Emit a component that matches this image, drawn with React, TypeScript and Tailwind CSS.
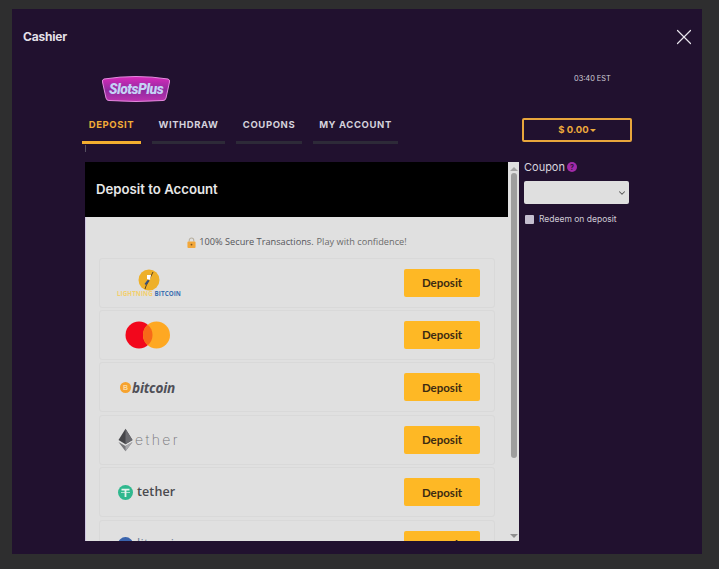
import { ChevronDown, X } from "lucide-react";

const tabs = [
  { title: "DEPOSIT", width: "w-[59px]", active: true },
  { title: "WITHDRAW", width: "w-[73px]", active: false },
  { title: "COUPONS", width: "w-[66px]", active: false },
  { title: "MY ACCOUNT", width: "w-[85px]", active: false },
];

const SlotsPlusLogo = () => (
  <div className="relative h-[28px] w-[70px]">
    <svg viewBox="0 0 70 28" className="h-full w-full">
      <defs>
        <linearGradient id="slotsFill" x1="0" y1="0" x2="0" y2="1">
          <stop offset="0" stopColor="#d92bbb" />
          <stop offset="0.55" stopColor="#8f2a9f" />
          <stop offset="1" stopColor="#bd33b0" />
        </linearGradient>
      </defs>
      <path
        d="M3 4 Q35 -1 67 4 Q69 4.500 68.500 7 L65 23 Q64.500 25.500 62 25.500 Q35 27.500 8 25.500 Q5.500 25.500 5 23 L1.500 7 Q1 4.500 3 4 Z"
        fill="url(#slotsFill)"
        stroke="#e58be0"
        strokeWidth="1"
      />
    </svg>
    <span className="absolute inset-0 flex items-center justify-center font-['Roboto',sans-serif] text-[14px] font-black italic tracking-[-0.5px] text-[#c5d2f5]">
      SlotsPlus
    </span>
  </div>
);

const LightningLogo = () => (
  <div className="ml-[17px] flex w-[64px] flex-col items-center">
    <svg viewBox="0 0 22 22" className="h-[22px] w-[22px]">
      <circle cx="11" cy="11" r="10.500" fill="#eeb029" />
      <path d="M15 3 L8 17 L7 20" stroke="#5a4320" strokeWidth="1" fill="none" />
      <path d="M9 6 L13 6 L12 11 L9 10 Z" fill="#ffffff" />
      <path d="M9.500 11 L11.500 12 L8 16 L6.500 15 Z" fill="#37507e" />
    </svg>
    <div className="-mt-[1px] whitespace-nowrap font-['Open_Sans',sans-serif] text-[6.2px] font-bold leading-[7px] tracking-[0.1px]">
      <span className="text-[#f3cf6c]">LIGHTNING </span>
      <span className="text-[#3b6fb0]">BITCOIN</span>
    </div>
  </div>
);

const MastercardLogo = () => (
  <svg viewBox="0 0 46 28" className="ml-[25px] h-[28px] w-[46px]">
    <circle cx="14" cy="14" r="13.500" fill="#f2071c" />
    <circle cx="31.500" cy="14" r="13.500" fill="#fea822" />
    <path d="M22.750 3.700 A13.500 13.500 0 0 1 22.750 24.300 A13.500 13.500 0 0 1 22.750 3.700 Z" fill="#f76a18" />
  </svg>
);

const BitcoinLogo = () => (
  <div className="ml-[20px] flex items-center gap-[1px]">
    <span className="flex h-[11px] w-[11px] items-center justify-center rounded-full bg-[#f6a32f] font-['Liberation_Sans',sans-serif] text-[7px] font-bold leading-none text-[#fbd9a4]">
      B
    </span>
    <span className="font-['Open_Sans',sans-serif] text-[13.6px] font-bold italic leading-none tracking-[-0.2px] text-[#4f4f57]">
      bitcoin
    </span>
  </div>
);

const EtherLogo = () => (
  <div className="ml-[18px] flex items-center">
    <svg viewBox="0 0 16 24" className="h-[24px] w-[15px]">
      <path d="M8 0 L15.500 12 L8 16.500 L0.500 12 Z" fill="#46464a" />
      <path d="M8 0 L8 16.500 L15.500 12 Z" fill="#6b6b70" />
      <path d="M0.500 14 L8 18.500 L15.500 14 L8 24 Z" fill="#77777b" />
      <path d="M8 18.500 L15.500 14 L8 24 Z" fill="#aaaaae" />
    </svg>
    <span className="ml-[2px] font-['Inter',sans-serif] text-[14px] font-extralight leading-none tracking-[2.4px] text-[#77777b]">
      ether
    </span>
  </div>
);

const TetherLogo = () => (
  <div className="ml-[18px] flex items-center gap-[4px]">
    <svg viewBox="0 0 15 15" className="h-[15px] w-[15px]">
      <circle cx="7.500" cy="7.500" r="7.500" fill="#2fb88e" />
      <path d="M3.500 3.800 H11.500 V5.400 H8.400 V12 H6.600 V5.400 H3.500 Z" fill="#e4f3ec" />
      <path d="M3 7.200 H12 V7.900 H3 Z" fill="#e4f3ec" />
    </svg>
    <span className="font-['Open_Sans',sans-serif] text-[12.5px] font-semibold leading-none tracking-[0.1px] text-[#4a4a4e]">
      tether
    </span>
  </div>
);

const LitecoinLogo = () => (
  <div className="ml-[18px] flex items-center gap-[4px]">
    <span className="flex h-[15px] w-[15px] items-center justify-center rounded-full bg-[#3a64ad] font-['Open_Sans',sans-serif] text-[10px] font-bold leading-none text-[#e4ecf7]">
      Ł
    </span>
    <span className="font-['Open_Sans',sans-serif] text-[12.5px] leading-none tracking-[0.4px] text-[#6c7a96]">
      litecoin
    </span>
  </div>
);

const methods = [
  { id: "lightning", logo: <LightningLogo /> },
  { id: "mastercard", logo: <MastercardLogo /> },
  { id: "bitcoin", logo: <BitcoinLogo /> },
  { id: "ether", logo: <EtherLogo /> },
  { id: "tether", logo: <TetherLogo /> },
  { id: "litecoin", logo: <LitecoinLogo /> },
];

const App = () => {
  return (
    <div className="h-[569px] w-[719px] overflow-hidden bg-[#2e2e2f] pl-[12px] pt-[9px] font-['Lato',sans-serif]">
      <div className="flex h-[545px] w-[690px] flex-col bg-[#21112f] pl-[73px]">
        {/* Title row */}
        <div className="-ml-[62px] flex h-[55px] items-center justify-between pr-[5px]">
          <h1 className="mt-[1px] font-['Inter',sans-serif] text-[12px] font-bold tracking-[-0.2px] text-[#e4e0e8]">
            Cashier
          </h1>
          <X className="h-[26px] w-[26px] text-[#e8e4ec]" strokeWidth={1.1} />
        </div>

        {/* Logo and clock */}
        <div className="mt-[11px] flex h-[43px] items-start">
          <div className="ml-[16px] w-[473px]">
            <SlotsPlusLogo />
          </div>
          <span className="-mt-[1px] font-['Inter',sans-serif] text-[7.4px] leading-[10px] text-[#d0ccd6]">
            03:40 EST
          </span>
        </div>

        {/* Tabs and balance */}
        <div className="flex h-[44px] items-start">
          <div className="flex w-[437px] flex-col">
            <nav className="-ml-[3px] flex gap-[11px]">
              {tabs.map((tab) => (
                <div key={tab.title} className={`flex flex-col items-center ${tab.width}`}>
                  <span
                    className={`whitespace-nowrap font-['Inter',sans-serif] text-[9.5px] font-bold leading-[14px] tracking-[0.6px] ${
                      tab.active ? "text-[#f1ac37]" : "text-[#d4d2dc]"
                    }`}
                  >
                    {tab.title}
                  </span>
                  <span className={`mt-[9px] h-[3px] w-full ${tab.active ? "bg-[#f3ae2f]" : "bg-[#2d2a38]"}`}></span>
                </div>
              ))}
            </nav>
            <span className="mt-[1px] h-[7px] w-px bg-[#55505f]"></span>
          </div>
          <button className="flex h-[24px] w-[110px] items-center justify-center gap-[1px] rounded-[2px] border-2 border-[#e8a63c] font-['Inter',sans-serif] text-[9.5px] font-bold text-[#eeaa3c]">
            $ 0.00
            <span className="mt-[1px] h-0 w-0 border-x-[3px] border-t-[3px] border-x-transparent border-t-[#eeaa3c]"></span>
          </button>
        </div>

        {/* Panel and coupon column */}
        <div className="flex items-start">
          <div className="flex h-[379px] w-[434px] overflow-hidden bg-[#e0e0e0]">
            <div className="h-full w-[423px] overflow-hidden">
              <div className="flex h-[55px] items-center bg-black pl-[11px] font-['Inter',sans-serif] text-[13.2px] font-semibold text-[#e8e8e8]">
                Deposit to Account
              </div>
              <div className="h-full border-l border-[#cfc6e0]">
                <p className="flex items-center justify-center gap-[3px] pt-[18px] font-['Open_Sans',sans-serif] text-[9.2px] leading-[14px] text-[#6b6b6b]">
                  <svg viewBox="0 0 10 12" className="h-[11px] w-[9px]">
                    <path d="M2.500 5 V3.500 A2.500 2.500 0 0 1 7.500 3.500 V5" stroke="#b8b0a0" strokeWidth="1.200" fill="none" />
                    <rect x="0.500" y="5" width="9" height="7" rx="1" fill="#f2a73a" />
                    <circle cx="5" cy="8.300" r="1" fill="#7d5520" />
                  </svg>
                  <span className="font-medium text-[#55555a]">100% Secure Transactions.</span> Play with confidence!
                </p>
                <div className="mt-[8.600px] flex flex-col gap-[2.400px] px-[13px]">
                  {methods.map((method) => (
                    <div
                      key={method.id}
                      className="flex h-[50px] shrink-0 items-center justify-between rounded-[3px] border border-[#d9d9d9] pr-[14px]"
                    >
                      {method.logo}
                      <button className="flex h-[28px] w-[76px] items-center justify-center rounded-[2px] bg-[#feb825] font-['Lato',sans-serif] text-[11.5px] font-bold text-[#3c2a12]">
                        Deposit
                      </button>
                    </div>
                  ))}
                </div>
              </div>
            </div>
            {/* Scrollbar */}
            <div className="flex h-full w-[11px] flex-col items-center bg-[#e0e0e0]">
              <span className="mt-[5px] h-0 w-0 border-x-[4px] border-b-[4px] border-x-transparent border-b-[#a3a3a3]"></span>
              <span className="mt-[2px] h-[285px] w-[6px] rounded-[3px] bg-[#9e9e9e]"></span>
              <span className="mb-[3px] mt-auto h-0 w-0 border-x-[4px] border-t-[4px] border-x-transparent border-t-[#8f8f8f]"></span>
            </div>
          </div>

          {/* Coupon */}
          <div className="ml-[5px] w-[104.5px]">
            <div className="-mt-[1px] flex items-center gap-[2px] font-['Inter',sans-serif] text-[11px] leading-[12px] text-[#d8d4de]">
              Coupon
              <span className="flex h-[10px] w-[10px] items-center justify-center rounded-full bg-[#a12aa8] text-[7px] font-bold leading-none text-[#2a1238]">
                ?
              </span>
            </div>
            <div className="mt-[8px] flex h-[23px] items-center justify-end rounded-[2px] bg-[#dfdfdf] pr-[2px]">
              <ChevronDown className="h-[10px] w-[10px] text-[#555555]" strokeWidth={2.5} />
            </div>
            <label className="ml-[1px] mt-[9px] flex items-center gap-[5px] font-['Inter',sans-serif] text-[8.5px] leading-[12px] text-[#cfcbd6]">
              <span className="h-[9px] w-[9px] rounded-[1px] bg-[#c5bfd0]"></span>
              Redeem on deposit
            </label>
          </div>
        </div>
      </div>
    </div>
  );
};

export default App;
